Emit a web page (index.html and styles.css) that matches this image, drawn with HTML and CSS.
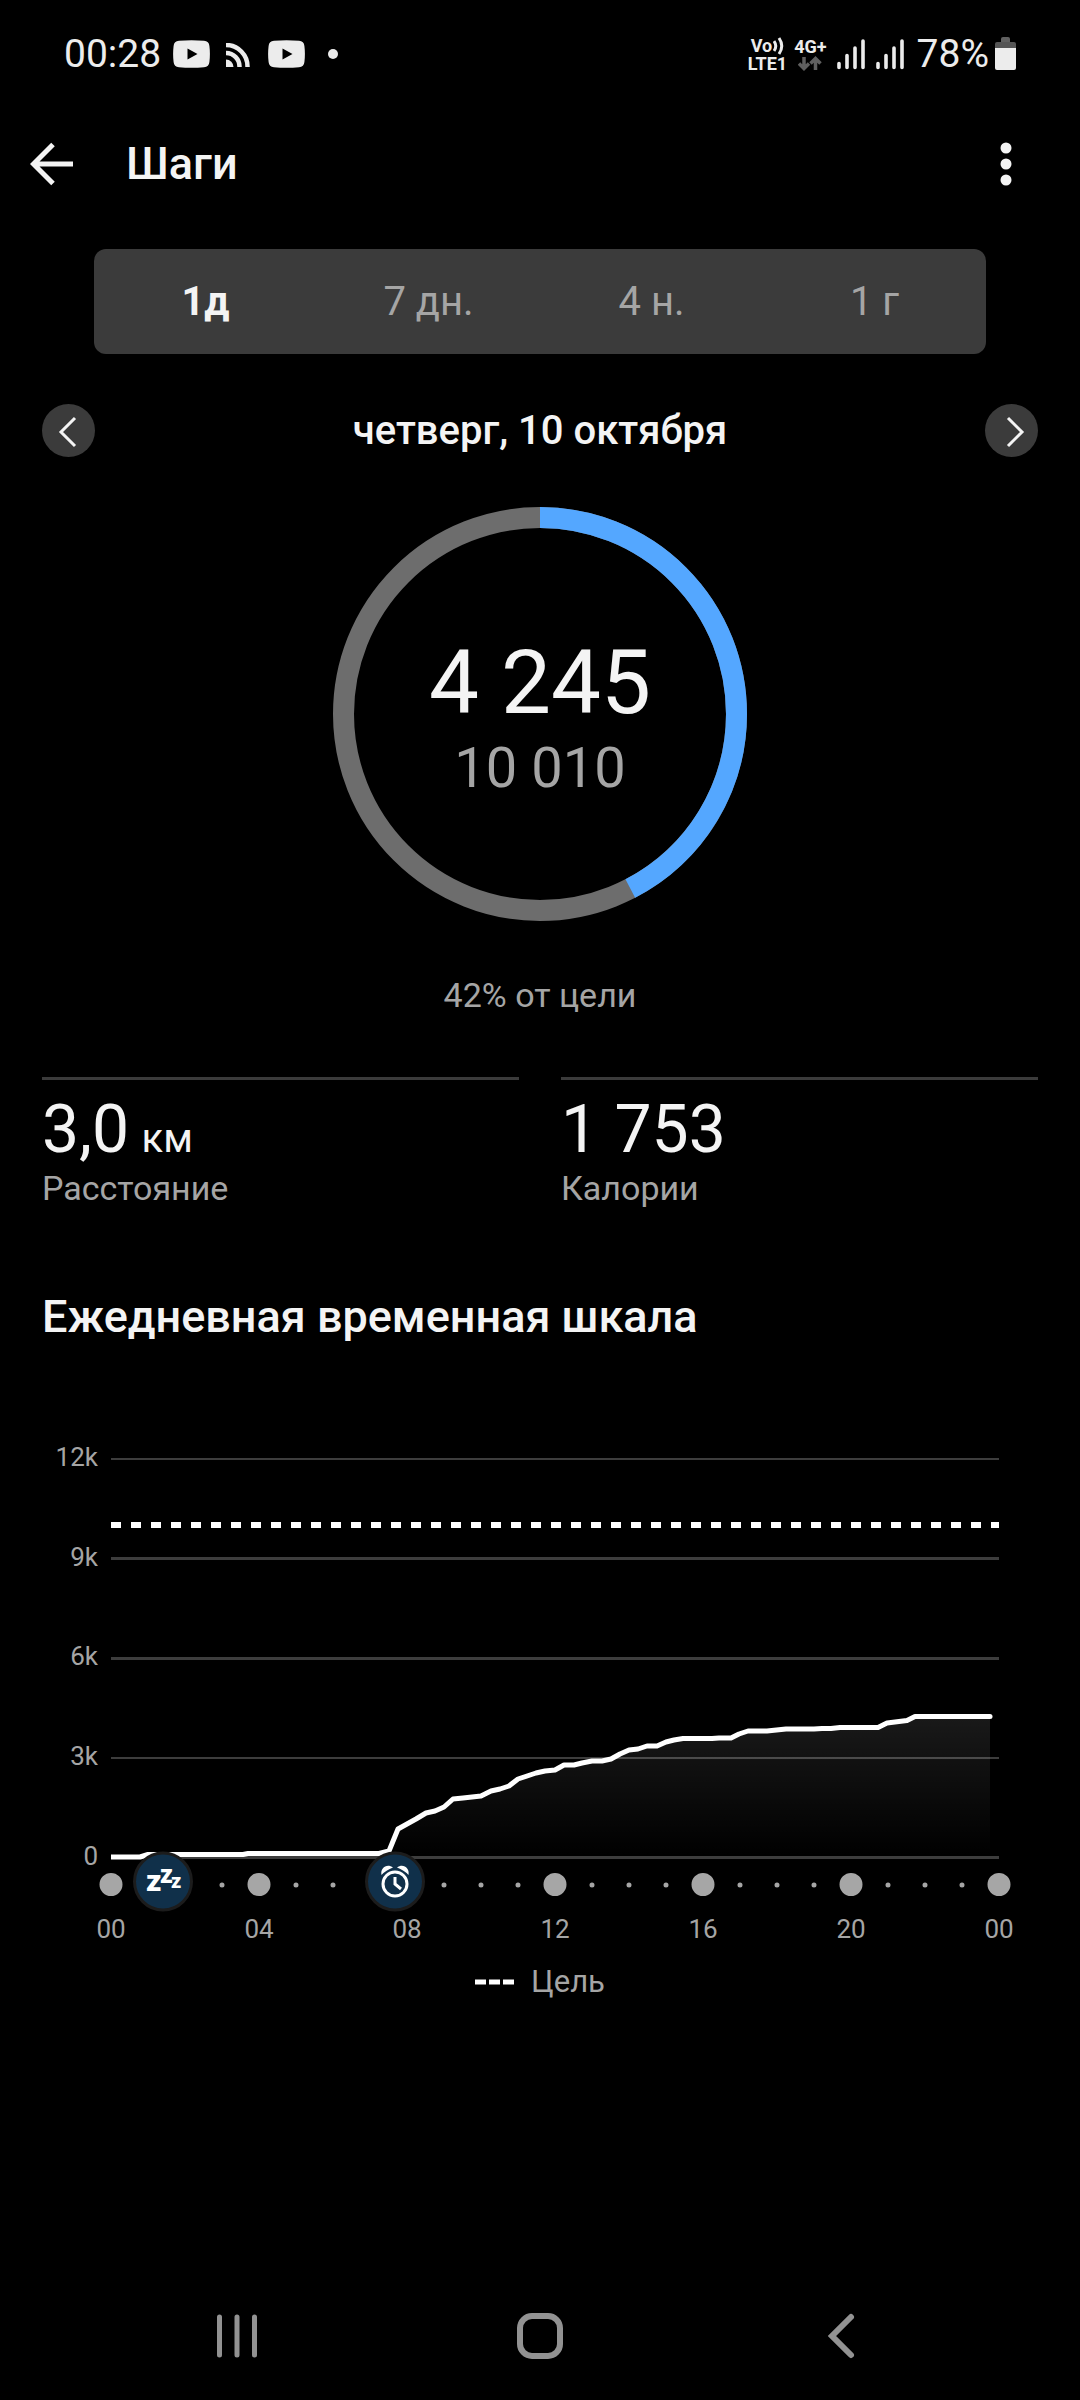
FILE: index.html
```html
<!DOCTYPE html>
<html lang="ru">
<head>
<meta charset="utf-8">
<meta name="viewport" content="width=device-width, initial-scale=1">
<title>Шаги</title>
<link rel="stylesheet" href="styles.css">
</head>
<body>
<div class="status">
  <div class="status-left">
    <span class="clock">00:28</span>
    <svg class="video-icon" width="37" height="28" viewBox="0 0 37 28" aria-hidden="true"><path fill="#ececec" fill-rule="evenodd" d="M6 .8Q18.500-.4 31 .8Q36 1 36.400 6Q37.400 14 36.400 22Q36 27 31 27.200Q18.500 28.400 6 27.200Q1 27 .6 22Q-.4 14 .6 6Q1 1 6 .8ZM14.500 8.500V19.500L24.500 14Z"/></svg>
    <svg class="feed-icon" width="24" height="24" viewBox="0 0 24 24" fill="none" stroke="#ececec" stroke-width="4.500" aria-hidden="true"><path d="M0 2A21.500 21.500 0 0 1 21.500 24M0 10A13.500 13.500 0 0 1 13.500 24"/><path fill="#ececec" stroke="none" d="M0 16.500A7.500 7.500 0 0 1 7.500 24H0Z"/></svg>
    <svg class="video-icon" width="37" height="28" viewBox="0 0 37 28" aria-hidden="true"><path fill="#ececec" fill-rule="evenodd" d="M6 .8Q18.500-.4 31 .8Q36 1 36.400 6Q37.400 14 36.400 22Q36 27 31 27.200Q18.500 28.400 6 27.200Q1 27 .6 22Q-.4 14 .6 6Q1 1 6 .8ZM14.500 8.500V19.500L24.500 14Z"/></svg>
    <span class="more-dot"></span>
  </div>
  <div class="status-right">
    <div class="net volte">
      <span class="vo">Vo<svg width="11" height="18" viewBox="0 0 11 18" fill="none" stroke="#ececec" stroke-width="3" aria-hidden="true"><path d="M1 4Q4.500 9 1 14M6 1Q11.500 9 6 17"/></svg></span>
      <span>LTE1</span>
    </div>
    <div class="net data">
      <span>4G+</span>
      <svg width="24" height="15" viewBox="0 0 24 15" fill="none" stroke="#606060" stroke-width="3.500" aria-hidden="true"><path d="M6 1V12M1 7.500L6 12.500L11 7.500M17.500 14V3M12.500 7.500L17.500 2.500L22.500 7.500"/></svg>
    </div>
    <svg class="signal" width="28" height="32" viewBox="0 0 28 32" stroke="#ececec" stroke-width="3.600" stroke-linecap="round" aria-hidden="true"><path d="M2 25.500V29.500M10 17.500V29.500M18 10V29.500M26 3V29.500"/></svg>
    <svg class="signal" width="28" height="32" viewBox="0 0 28 32" stroke="#ececec" stroke-width="3.600" stroke-linecap="round" aria-hidden="true"><path d="M2 25.500V29.500M10 17.500V29.500M18 10V29.500M26 3V29.500"/></svg>
    <span class="percent">78%</span>
    <svg class="battery" width="21" height="33" viewBox="0 0 21 33" aria-hidden="true"><path fill="#606060" d="M6 6V2Q6 0 8 0H13Q15 0 15 2V6Z"/><path fill="#555" d="M0 11V7Q0 5 2 5H19Q21 5 21 7V11Z"/><path fill="#ececec" d="M0 11H21V31Q21 33 19 33H2Q0 33 0 31Z"/></svg>
  </div>
</div>

<header class="header">
  <button class="icon-button" aria-label="Назад"><svg width="44" height="44" viewBox="0 0 44 44" fill="none" stroke="#f4f4f4" stroke-width="5"><path d="M43 22H5M23 2.500L3.500 22L23 41.500"/></svg></button>
  <h1 class="title">Шаги</h1>
  <button class="icon-button menu" aria-label="Меню"><svg width="12" height="44" viewBox="0 0 12 44" fill="#f4f4f4"><circle cx="6" cy="6" r="5.500"/><circle cx="6" cy="22" r="5.500"/><circle cx="6" cy="38" r="5.500"/></svg></button>
</header>

<main class="main">
  <div class="tabs" role="tablist">
    <button class="tab selected" role="tab" aria-selected="true">1д</button>
    <button class="tab" role="tab" aria-selected="false">7 дн.</button>
    <button class="tab" role="tab" aria-selected="false">4 н.</button>
    <button class="tab" role="tab" aria-selected="false">1 г</button>
  </div>

  <div class="date-nav">
    <button class="round" aria-label="Предыдущий день"><svg width="53" height="53" viewBox="0 0 53 53" fill="none" stroke="#f4f4f4" stroke-width="3"><path d="M33 14L19 28L33 42"/></svg></button>
    <span class="date">четверг, 10 октября</span>
    <button class="round" aria-label="Следующий день"><svg width="53" height="53" viewBox="0 0 53 53" fill="none" stroke="#f4f4f4" stroke-width="3"><path d="M23 14L37 28L23 42"/></svg></button>
  </div>

  <section class="goal">
    <div class="ring">
      <svg class="ring-art" viewBox="0 0 414 414" fill="none" stroke-width="21" aria-hidden="true">
        <circle cx="207" cy="207" r="196.500" stroke="#6d6d6d"/>
        <circle cx="207" cy="207" r="196.500" stroke="#54a7ff" pathLength="1000" stroke-dasharray="424 1000" transform="rotate(-90 207 207)"/>
      </svg>
      <div class="ring-text">
        <span class="steps">4 245</span>
        <span class="target">10 010</span>
      </div>
    </div>
    <p class="caption">42% от цели</p>
  </section>

  <section class="stats">
    <div class="stat"><div class="value">3,0 <span class="unit">км</span></div><div class="label">Расстояние</div></div>
    <div class="stat"><div class="value">1 753</div><div class="label">Калории</div></div>
  </section>

  <section class="timeline">
    <h2 class="heading">Ежедневная временная шкала</h2>
    <svg class="chart" viewBox="-69 -59 996 544" role="img" aria-label="Шаги за день">
      <defs>
        <linearGradient id="fade" gradientUnits="userSpaceOnUse" x1="0" y1="257" x2="0" y2="398">
          <stop offset="0" stop-color="#fff" stop-opacity=".1"/>
          <stop offset="1" stop-color="#fff" stop-opacity="0"/>
        </linearGradient>
      </defs>
      <g class="grid-lines">
        <path d="M0 0H888M0 299H888" stroke-width="2"/>
        <path d="M0 99.500H888M0 199.500H888M0 398.500H888" stroke-width="3"/>
      </g>
      <g class="y-labels">
        <text x="-13" y="7">12k</text><text x="-13" y="107">9k</text><text x="-13" y="206">6k</text><text x="-13" y="306">3k</text><text x="-13" y="406">0</text>
      </g>
      <path d="M0 66H888" stroke="#fff" stroke-width="6" stroke-dasharray="10 10"/>
      <path fill="url(#fade)" d="M268 398V395L278 392L287 370L305 360L315 354L324 352L333 348L342 340L370 337L389 330L407 320L425 314L444 311L453 306L463 306L481 302L491 302L500 300L518 291L527 290L536 287L546 287L555 283L572 279.500H601L620 279L637 272H656L675 270H703L729 268.500H767L776 264L796 261.500L804 257.500H879V398Z"/>
      <path fill="none" stroke="#fff" stroke-width="5" stroke-linejoin="round" d="M0 398H29L37 395.500H132L137 394.500H268L278 392L287 370L296 365L305 360L315 354L324 352L333 348L342 340L352 339L370 337L380 332L389 330L398 327L407 320L425 314L434 312L444 311L453 306H463L471 304L481 302H491L500 300L509 295L518 291L527 290L536 287H546L555 283L563 281L572 279.500H601L608 279H620L628 275L637 272H656L675 270H703L711 269.500H720L729 268.500H767L776 264L796 261.500L804 257.500H879"/>
      <circle cx="879" cy="257.500" r="2.500" fill="#fff"/>
      <g fill="none" stroke="#a6a6a6" stroke-linecap="round">
        <path stroke-width="5" d="M111 426h0M185 426h0M222 426h0M333 426h0M370 426h0M407 426h0M481 426h0M518 426h0M555 426h0M629 426h0M666 426h0M703 426h0M777 426h0M814 426h0M851 426h0"/>
        <path stroke-width="23" d="M0 425.500h0M148 425.500h0M444 425.500h0M592 425.500h0M740 425.500h0M888 425.500h0"/>
      </g>
      <g class="badge">
        <circle cx="52" cy="422.500" r="28.500"/>
        <text class="z-large" x="35" y="432">z</text><text class="z-medium" x="49" y="424">z</text><text class="z-small" x="60" y="429">z</text>
      </g>
      <g class="badge">
        <circle cx="284" cy="422.500" r="28.500"/>
        <g fill="none" stroke="#fff"><circle class="clock-face" cx="284" cy="425" r="12"/><path stroke-width="3" d="M284 418V425L290 430"/></g>
        <path fill="#fff" d="M270.500 416C269 409 276 404 282 408.500Q275 411 270.500 416ZM297.500 416C299 409 292 404 286 408.500Q293 411 297.500 416Z"/>
      </g>
      <g class="x-labels">
        <text x="0" y="479">00</text><text x="148" y="479">04</text><text x="296" y="479">08</text><text x="444" y="479">12</text><text x="592" y="479">16</text><text x="740" y="479">20</text><text x="888" y="479">00</text>
      </g>
    </svg>
    <div class="legend">
      <svg width="39" height="6" viewBox="0 0 39 6" aria-hidden="true"><path d="M0 3H39" stroke="#fff" stroke-width="5" stroke-dasharray="11 3"/></svg>
      <span>Цель</span>
    </div>
  </section>
</main>

<nav class="system-nav">
  <button class="icon-button" aria-label="Недавние"><svg width="48" height="48" viewBox="0 0 48 48" stroke="#929292" stroke-width="5" stroke-linecap="round"><path d="M6.500 5V43M24 5V43M41.500 5V43"/></svg></button>
  <button class="icon-button" aria-label="Главный экран"><svg width="48" height="48" viewBox="0 0 48 48" fill="none" stroke="#929292" stroke-width="6"><rect x="4" y="4" width="40" height="40" rx="12"/></svg></button>
  <button class="icon-button" aria-label="Назад"><svg width="48" height="48" viewBox="0 0 48 48" fill="none" stroke="#929292" stroke-width="6" stroke-linecap="round"><path d="M32 5L13 24L32 43"/></svg></button>
</nav>
</body>
</html>
```
FILE: styles.css
```css
* { box-sizing: border-box; }

body {
  margin: 0;
  min-height: 100vh;
  display: flex;
  flex-direction: column;
  background: #000;
  color: #f4f4f4;
  font-family: Roboto, "Noto Sans", sans-serif;
}

h1, h2, p { margin: 0; }
svg { display: block; flex: none; }

button {
  padding: 0;
  border: 0;
  background: none;
  color: inherit;
  font: inherit;
}

.status {
  height: 106px;
  padding: 2px 64px 0;
  display: flex;
  align-items: center;
  justify-content: space-between;
  color: #ececec;
}

.status-left, .status-right { display: flex; align-items: center; }
.clock, .percent { font-size: 39px; line-height: 48px; }
.video-icon { margin-left: 12px; }
.feed-icon { margin: 2px 6px 0 16px; }
.more-dot {
  width: 10px;
  height: 10px;
  margin-left: 23px;
  border-radius: 50%;
  background: #ececec;
}

.net {
  display: flex;
  flex-direction: column;
  align-items: center;
  font-size: 18px;
  line-height: 17px;
  font-weight: 700;
}
.vo { display: flex; align-items: center; gap: 1px; }
.data { margin: 0 10px 0 7px; gap: 1px; }
.signal { margin-right: 11px; }
.percent { margin: 0 6px 0 2px; }
.battery { margin-bottom: 2px; }

.header {
  height: 116px;
  padding: 0 68px 0 30px;
  display: flex;
  align-items: center;
}
.icon-button { display: flex; align-items: center; justify-content: center; }
.title { margin-left: 52px; font-size: 45px; line-height: 54px; font-weight: 500; }
.menu { margin-left: auto; }

.main { flex: 1; padding: 27px 42px 0; }

.tabs {
  margin: 0 52px;
  height: 105px;
  display: grid;
  grid-template-columns: repeat(4, 1fr);
  border-radius: 12px;
  background: #3b3b3b;
}
.tab { font-size: 40px; line-height: 48px; color: #a5a5a5; }
.selected { font-weight: 700; color: #f4f4f4; }

.date-nav {
  margin-top: 50px;
  display: flex;
  align-items: center;
  justify-content: space-between;
}
.round { border-radius: 50%; background: #3b3b3b; }
.date { font-size: 40px; line-height: 48px; font-weight: 500; }

.goal {
  margin-top: 50px;
  display: flex;
  flex-direction: column;
  align-items: center;
}
.ring { display: grid; width: 414px; max-width: 100%; place-items: center; }
.ring-art, .ring-text { grid-area: 1 / 1; }
.ring-art { width: 100%; }
.ring-text { padding-top: 4px; display: flex; flex-direction: column; align-items: center; }
.steps { font-size: 89px; line-height: 104px; }
.target { font-size: 56px; line-height: 66px; color: #a5a5a5; }
.caption { margin-top: 54px; font-size: 34px; line-height: 40px; color: #a5a5a5; }

.stats {
  margin-top: 62px;
  display: grid;
  grid-template-columns: 1fr 1fr;
  gap: 42px;
}
.stat { padding-top: 12px; border-top: 3px solid #3b3b3b; }
.value { font-size: 66px; line-height: 76px; }
.unit { margin-left: -4px; font-size: 40px; line-height: 40px; }
.label { font-size: 34px; line-height: 40px; color: #a5a5a5; }

.timeline { margin-top: 82px; }
.heading { font-size: 45px; line-height: 54px; font-weight: 500; }
.chart { margin-top: 56px; width: 100%; height: auto; }
.grid-lines { stroke: #3d3d3d; }
.y-labels, .x-labels { fill: #a5a5a5; font-size: 26px; }
.y-labels { text-anchor: end; }
.x-labels { text-anchor: middle; }
.badge { fill: #fff; font-weight: 900; }
.badge > circle { fill: #10304a; stroke: #1c1c1c; stroke-width: 3px; }
.clock-face { stroke-width: 3px; }
.z-large { font-size: 30px; }
.z-medium { font-size: 25px; }
.z-small { font-size: 20px; }

.legend {
  margin: 18px 0 20px;
  display: flex;
  align-items: center;
  justify-content: center;
  gap: 17px;
  font-size: 31px;
  line-height: 40px;
  color: #a5a5a5;
}

.system-nav {
  height: 128px;
  padding: 0 213px;
  display: flex;
  align-items: center;
  justify-content: space-between;
}
```
